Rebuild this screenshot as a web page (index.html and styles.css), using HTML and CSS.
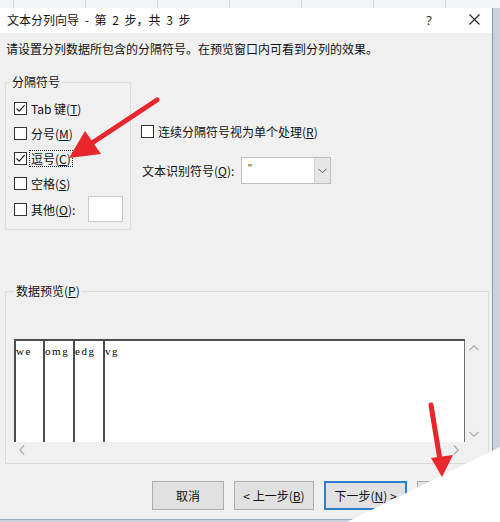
FILE: index.html
```html
<!DOCTYPE html>
<html lang="zh-CN">
<head>
<meta charset="utf-8">
<title>文本分列向导</title>
<link rel="stylesheet" href="styles.css">
</head>
<body>
<div class="screen">
  <div class="dialog">
    <div class="titlebar">
      <span class="title">文本分列向导 - 第 2 步，共 3 步</span>
      <span class="tb-btn help">?</span>
      <span class="tb-btn close"><svg width="11" height="11" viewBox="0 0 11 11"><path d="M0.5 0.5 L10.5 10.5 M10.5 0.5 L0.5 10.5" stroke="#222" stroke-width="1.1" fill="none"/></svg></span>
    </div>
    <div class="content">
      <p class="intro">请设置分列数据所包含的分隔符号。在预览窗口内可看到分列的效果。</p>
      <div class="options">
        <fieldset class="group delim">
          <legend>分隔符号</legend>
          <div class="check row"><span class="box"><svg width="11" height="11" viewBox="0 0 11 11"><path d="M1.5 5.5 L4.2 8.2 L9.6 2.2" stroke="#222" stroke-width="1.2" fill="none"/></svg></span><span class="lbl">Tab 键(<u>T</u>)</span></div>
          <div class="check row"><span class="box"></span><span class="lbl">分号(<u>M</u>)</span></div>
          <div class="check row"><span class="box"><svg width="11" height="11" viewBox="0 0 11 11"><path d="M1.5 5.5 L4.2 8.2 L9.6 2.2" stroke="#222" stroke-width="1.2" fill="none"/></svg></span><span class="lbl focus">逗号(<u>C</u>)</span></div>
          <div class="check row"><span class="box"></span><span class="lbl">空格(<u>S</u>)</span></div>
          <div class="check row other"><span class="box"></span><span class="lbl">其他(<u>O</u>):</span><span class="textbox"></span></div>
        </fieldset>
        <div class="side">
          <div class="check"><span class="box"></span><span class="lbl">连续分隔符号视为单个处理(<u>R</u>)</span></div>
          <div class="qualifier">
            <span class="qlabel">文本识别符号(<u>Q</u>):</span>
            <div class="combo">
              <span class="combo-val">"</span>
              <span class="combo-btn"><svg width="9" height="6" viewBox="0 0 9 6"><path d="M0.5 0.8 L4.5 4.8 L8.5 0.8" stroke="#555" stroke-width="1" fill="none"/></svg></span>
            </div>
          </div>
        </div>
      </div>
      <fieldset class="group preview">
        <legend>数据预览(<u>P</u>)</legend>
        <div class="preview-grid">
          <div class="table">
            <div class="col c1">we</div>
            <div class="col c2">omg</div>
            <div class="col c3">edg</div>
            <div class="col c4">vg</div>
          </div>
          <div class="vscroll">
            <svg width="10" height="6" viewBox="0 0 10 6"><path d="M0.5 5.2 L5 0.8 L9.5 5.2" stroke="#a8a8a8" stroke-width="1.1" fill="none"/></svg>
            <svg width="10" height="6" viewBox="0 0 10 6"><path d="M0.5 0.8 L5 5.2 L9.5 0.8" stroke="#a8a8a8" stroke-width="1.1" fill="none"/></svg>
          </div>
          <div class="hscroll">
            <svg width="6" height="10" viewBox="0 0 6 10"><path d="M5.2 0.5 L0.8 5 L5.2 9.5" stroke="#a8a8a8" stroke-width="1.1" fill="none"/></svg>
            <svg width="6" height="10" viewBox="0 0 6 10"><path d="M0.8 0.5 L5.2 5 L0.8 9.5" stroke="#a8a8a8" stroke-width="1.1" fill="none"/></svg>
          </div>
        </div>
      </fieldset>
      <div class="buttons">
        <span class="btn cancel">取消</span>
        <span class="btn back">&lt; 上一步(<u>B</u>)</span>
        <span class="btn next default">下一步(<u>N</u>) &gt;</span>
        <span class="btn finish">完成(<u>F</u>)</span>
      </div>
    </div>
  </div>
  <svg class="overlay" width="500" height="522" viewBox="0 0 500 522">
    <polygon points="347,522 500,447 500,522" fill="#ffffff"/>
    <line x1="157" y1="100" x2="92" y2="143" stroke="#e8262c" stroke-width="5" stroke-linecap="round"/>
    <polygon points="69,158 85,131 101,154" fill="#e8262c"/>
    <line x1="431" y1="405" x2="440" y2="460" stroke="#e8262c" stroke-width="5" stroke-linecap="round"/>
    <polygon points="442,477 431,458 453,455" fill="#e8262c"/>
  </svg>
</div>
</body>
</html>
```
FILE: styles.css
```css
* { box-sizing: border-box; }
html, body { margin: 0; padding: 0; }
body {
  width: 500px;
  height: 522px;
  overflow: hidden;
  font-family: "Noto Sans CJK SC", "Noto Sans", sans-serif;
  font-size: 12px;
  color: #111;
}
.screen {
  position: relative;
  width: 500px;
  height: 522px;
  overflow: hidden;
  background-color: #c9d2db;
  padding-top: 8px;
}
.screen::before {
  content: "";
  position: absolute;
  left: 0;
  top: 0;
  width: 500px;
  height: 8px;
  background-color: #f4f5f6;
  background-image: linear-gradient(90deg, #cfd2d6 1px, transparent 1px);
  background-size: 72px 100%;
  background-position: 13px 0;
}
.dialog {
  width: 493px;
  height: 512px;
  background: #f0f0f0;
  border-right: 1px solid #8d9aa6;
  border-bottom: 1px solid #9aabbb;
  display: flex;
  flex-direction: column;
}
.titlebar {
  height: 25px;
  background: #ffffff;
  display: flex;
  align-items: center;
  line-height: 16px;
  padding-bottom: 2px;
}
.title { flex: 1; padding-left: 7px; word-spacing: 3px; }
.tb-btn { width: 36px; display: flex; justify-content: center; align-items: center; }
.help { margin-right: 9px; font-family: "Noto Sans", sans-serif; font-size: 13px; color: #333; }
.content { flex: 1; }
.intro { margin: 8px 0 0 6px; line-height: 16px; }
.options { display: flex; margin-top: 17px; }
.group {
  margin: 0;
  border: 1px solid #dcdcdc;
  min-width: 0;
}
.group legend { padding: 0 2px; line-height: 16px; }
.delim {
  margin-left: 5px;
  width: 126px;
  padding: 6px 7px 7px 4px;
}
.check { display: flex; align-items: center; gap: 2px; }
.row { height: 25px; padding-left: 4px; }
.row.other { height: 26px; }
.box {
  width: 13px;
  height: 13px;
  border: 1px solid #333;
  background: #fff;
  display: flex;
  align-items: center;
  justify-content: center;
  flex: none;
}
.lbl { border: 1px dotted transparent; padding: 0 1px; line-height: 15px; }
.lbl.focus { border-color: #222; }
.textbox {
  margin-left: auto;
  width: 35px;
  height: 26px;
  background: #fff;
  border: 1px solid #c8c8c8;
}
.side { margin-left: 10px; padding-top: 49px; }
.side .check { height: 16px; }
.qualifier { display: flex; align-items: center; margin-top: 18px; }
.qlabel { width: 100px; padding-left: 1px; }
.combo {
  width: 90px;
  height: 27px;
  border: 1px solid #bdbdbd;
  background: #fff;
  display: flex;
}
.combo-val {
  flex: 1;
  padding: 3px 0 0 6px;
  line-height: 14px;
  font-family: "Liberation Sans", sans-serif;
  font-size: 11px;
  color: #333;
}
.combo-btn {
  width: 16px;
  background: #e6e6e6;
  border-left: 1px solid #d0d0d0;
  display: flex;
  align-items: center;
  justify-content: center;
}
.preview {
  margin: 53px 3px 0 5px;
  padding: 40px 6px 6px 8px;
}
.preview-grid {
  display: grid;
  grid-template-columns: 1fr 17px;
  grid-template-rows: 103px 15px;
}
.table {
  background: #fff;
  border-top: 2px solid #4d4d4d;
  border-left: 2px solid #4d4d4d;
  border-right: 1px solid #6e6e6e;
  display: flex;
  font-family: "Liberation Serif", serif;
  font-size: 11px;
  letter-spacing: 1.6px;
  line-height: 14px;
  color: #000;
}
.col { padding-top: 3px; }
.c1 { width: 27px; }
.c2, .c3 { width: 30px; border-left: 2px solid #4d4d4d; }
.c4 { flex: 1; border-left: 2px solid #4d4d4d; }
.vscroll {
  display: flex;
  flex-direction: column;
  align-items: center;
  justify-content: space-between;
  padding: 6px 0 5px;
}
.hscroll {
  grid-column: 1 / 2;
  display: flex;
  align-items: center;
  justify-content: space-between;
  padding: 0 6px 0 5px;
}
.buttons {
  display: flex;
  justify-content: flex-end;
  gap: 10px;
  margin-top: 17px;
  padding-right: 3px;
}
.btn {
  height: 29px;
  border: 1px solid #adadad;
  background: #e1e1e1;
  display: flex;
  align-items: center;
  justify-content: center;
  line-height: 16px;
}
.cancel { width: 72px; }
.back { width: 80px; }
.next { width: 83px; }
.finish { width: 72px; }
.default { border: 2px solid #2f7fd1; }
.overlay { position: absolute; left: 0; top: 0; pointer-events: none; }
```
